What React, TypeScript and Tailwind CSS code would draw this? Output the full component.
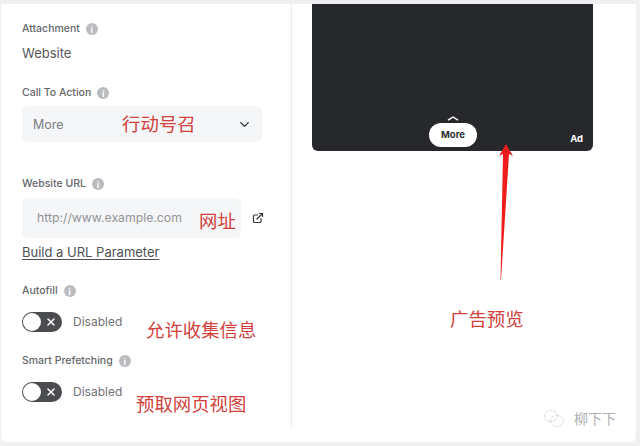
import { ChevronDown, ExternalLink, X } from "lucide-react";

const CJK = "font-['Noto_Sans_CJK_SC',sans-serif]";

function Info() {
  return (
    <span className="flex h-3 w-3 shrink-0 items-center justify-center rounded-full bg-[#b9bbbe] text-[9px] font-bold leading-none text-white">
      i
    </span>
  );
}

function Label({ children }: { children: string }) {
  return (
    <div className="flex h-4 items-center gap-[6px] text-[10.5px] font-medium leading-4 text-[#65676b]">
      {children}
      <Info />
    </div>
  );
}

function Toggle() {
  return (
    <div className="flex items-center gap-[11px]">
      <div className="flex h-5 w-10 items-center justify-between rounded-full bg-[#4a4c50] pl-[1px] pr-[5px]">
        <span className="h-[18px] w-[18px] rounded-full bg-white" />
        <X size={12} strokeWidth={3} className="text-white" />
      </div>
      <span className="pt-[1px] text-[12px] leading-5 text-[#6f7175]">Disabled</span>
    </div>
  );
}

// Red notes pasted over the screenshot
function Note({ className, children }: { className: string; children: string }) {
  return (
    <span className={`absolute whitespace-nowrap text-[18.4px] leading-6 text-[#d2413c] ${CJK} ${className}`}>
      {children}
    </span>
  );
}

export default function App() {
  return (
    <div className="relative h-[446px] w-[640px] overflow-hidden bg-[#f0f0f1] font-['Inter',sans-serif] pb-1 pl-[1px] pr-1 pt-1">
      <div className="flex h-full rounded-b-md bg-white">
        {/* form column */}
        <div className="h-[424px] w-[291px] shrink-0 border-r border-[#e9eaeb] pl-[21px] pt-[17px]">
          <Label>Attachment</Label>
          <p className="mt-[7px] text-[13px] leading-[18px] text-[#55575b]">Website</p>

          <div className="mt-[23px]">
            <Label>Call To Action</Label>
          </div>
          <div className="mt-[5px] flex h-9 w-60 items-center justify-between rounded-md bg-[#f5f6f7] pl-[11px] pr-[10px]">
            <span className="pt-[2px] text-[12.5px] text-[#7c7e82]">More</span>
            <ChevronDown size={15} strokeWidth={2.2} className="text-[#2f3136]" />
          </div>

          <div className="mt-[34px]">
            <Label>Website URL</Label>
          </div>
          <div className="mt-[6px] flex items-center gap-[11px]">
            <div className="flex h-10 w-[219px] items-center rounded-md bg-[#f5f6f7] pl-[15px]">
              <span className="pt-[1px] text-[12.25px] text-[#929497]">http://www.example.com</span>
            </div>
            <ExternalLink size={12} strokeWidth={2.4} className="text-[#36383c]" />
          </div>
          <a className="mt-[5px] block text-[13px] leading-[18px] text-[#4f5155] underline underline-offset-2">
            Build a URL Parameter
          </a>

          <div className="mt-[22px]">
            <Label>Autofill</Label>
          </div>
          <div className="mt-[12px]">
            <Toggle />
          </div>

          <div className="mt-[21px]">
            <Label>Smart Prefetching</Label>
          </div>
          <div className="mt-[12px]">
            <Toggle />
          </div>
        </div>

        {/* ad preview column */}
        <div className="ml-5 h-[147px] w-[281px] rounded-b-md bg-[#26282c]">
          <div className="flex h-full items-end justify-between pb-1 pr-[10px]">
            <div className="ml-[117px] flex flex-col items-center">
              <svg width="12" height="5" viewBox="0 0 12 5" fill="none" stroke="#fff" strokeWidth="1.4" className="mb-[2px]" aria-hidden>
                <path d="M1 4.2 L6 1 L11 4.2" />
              </svg>
              <span className="flex h-6 w-12 items-center justify-center rounded-full bg-white text-[9.5px] font-bold text-[#2b2d31]">
                More
              </span>
            </div>
            <span className="text-[9.5px] font-bold leading-4 text-white">Ad</span>
          </div>
        </div>
      </div>

      {/* red arrow */}
      <svg className="absolute left-[490px] top-[140px]" width="30" height="145" viewBox="0 0 30 145" aria-hidden>
        <path d="M16 4 L23 16 L19 14 L11 140 L10.5 140 L13 14 L9 16 Z" fill="#ef1c1c" />
      </svg>

      <Note className="left-[122px] top-[111px]">行动号召</Note>
      <Note className="left-[199px] top-[208px]">网址</Note>
      <Note className="left-[146px] top-[317px]">允许收集信息</Note>
      <Note className="left-[450px] top-[306px]">广告预览</Note>
      <Note className="left-[136px] top-[391px]">预取网页视图</Note>

      {/* watermark */}
      <div className="absolute left-[543px] top-[408px] flex items-center gap-[9px] opacity-70">
        <svg width="22" height="20" viewBox="0 0 22 20" fill="none" stroke="#b4b6b8" strokeWidth="1" strokeDasharray="1.5 1.2" aria-hidden>
          <ellipse cx="8" cy="8" rx="6.5" ry="5.5" />
          <ellipse cx="14" cy="13" rx="6.5" ry="5.5" />
        </svg>
        <span className={`text-[14px] leading-5 text-[#8d8f92] ${CJK}`}>柳下下</span>
      </div>
    </div>
  );
}
